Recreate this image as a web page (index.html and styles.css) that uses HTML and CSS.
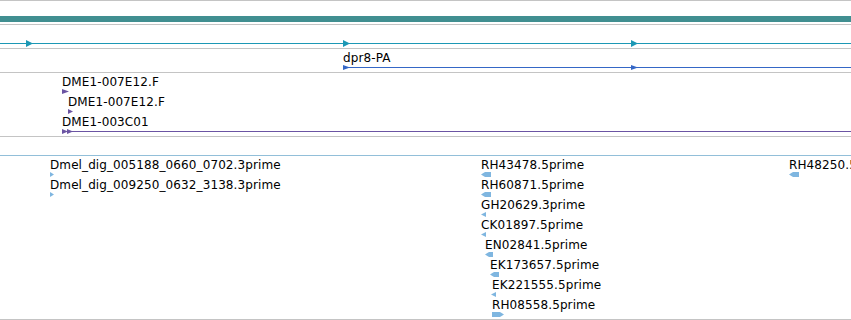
FILE: index.html
```html
<!DOCTYPE html>
<html>
<head>
	<title>dpr8 region</title>
	<link rel="stylesheet" href="styles.css">
</head>
<body>

<div class="browser">

	<!-- reference sequence overview -->
	<div class="track trackRef">
		<div class="refBar"></div>
	</div>

	<!-- gene span -->
	<div class="track trackGene">
		<svg class="strandLine" width="851" height="7">
			<line x1="0" y1="3.5" x2="851" y2="3.5" class="cyanStroke"/>
			<polygon points="26,0 33,3.5 26,7" class="cyanFill"/>
			<polygon points="343,0 350,3.5 343,7" class="cyanFill"/>
			<polygon points="631,0 638,3.5 631,7" class="cyanFill"/>
		</svg>
	</div>

	<!-- transcripts -->
	<div class="track trackMrna">
		<div class="feat" style="left:343px; top:2px;">
			<span class="label">dpr8-PA</span>
			<svg class="glyph" width="508" height="5">
				<line x1="0" y1="2.5" x2="508" y2="2.5" class="blueStroke"/>
				<polygon points="0,0 7,2.5 0,5" class="blueFill"/>
				<polygon points="288,0 295,2.5 288,5" class="blueFill"/>
			</svg>
		</div>
	</div>

	<!-- cDNA clones -->
	<div class="track trackClone">
		<div class="feat" style="left:62px; top:2px;">
			<span class="label">DME1-007E12.F</span>
			<svg class="glyph" width="8" height="5">
				<polygon points="0,0 7,2.5 0,5" class="purpleFill"/>
			</svg>
		</div>
		<div class="feat" style="left:68px; top:22px;">
			<span class="label">DME1-007E12.F</span>
			<svg class="glyph" width="6" height="5">
				<polygon points="0,0 5,2.5 0,5" class="purpleFill"/>
			</svg>
		</div>
		<div class="feat" style="left:62px; top:42px;">
			<span class="label">DME1-003C01</span>
			<svg class="glyph" width="789" height="5">
				<line x1="10" y1="2.5" x2="789" y2="2.5" class="purpleStroke"/>
				<polygon points="0,0 6,2.5 0,5" class="purpleFill"/>
				<polygon points="5,0 11,2.5 5,5" class="purpleFill"/>
			</svg>
		</div>
	</div>

	<div class="track trackEmpty"></div>

	<!-- EST hits -->
	<div class="track trackEst">
		<div class="feat" style="left:50px; top:2px;">
			<span class="label">Dmel_dig_005188_0660_0702.3prime</span>
			<svg class="glyph" width="4" height="5"><polygon points="0,0 4,2.5 0,5" class="estFill"/></svg>
		</div>
		<div class="feat" style="left:50px; top:22px;">
			<span class="label">Dmel_dig_009250_0632_3138.3prime</span>
			<svg class="glyph" width="4" height="5"><polygon points="0,0 4,2.5 0,5" class="estFill"/></svg>
		</div>

		<div class="feat" style="left:481px; top:2px;">
			<span class="label">RH43478.5prime</span>
			<svg class="glyph" width="10" height="5"><polygon points="0,2.5 4,0 10,0 10,5 4,5" class="estFill"/></svg>
		</div>
		<div class="feat" style="left:481px; top:22px;">
			<span class="label">RH60871.5prime</span>
			<svg class="glyph" width="10" height="5"><polygon points="0,2.5 4,0 10,0 10,5 4,5" class="estFill"/></svg>
		</div>
		<div class="feat" style="left:481px; top:42px;">
			<span class="label">GH20629.3prime</span>
			<svg class="glyph" width="6" height="5"><polygon points="0,2.5 5,0 5,5" class="estFill"/></svg>
		</div>
		<div class="feat" style="left:481px; top:62px;">
			<span class="label">CK01897.5prime</span>
			<svg class="glyph" width="6" height="5"><polygon points="0,2.5 5,0 5,5" class="estFill"/></svg>
		</div>
		<div class="feat" style="left:485px; top:82px;">
			<span class="label">EN02841.5prime</span>
			<svg class="glyph" width="8" height="5"><polygon points="0,2.5 4,0 8,0 8,5 4,5" class="estFill"/></svg>
		</div>
		<div class="feat" style="left:490px; top:102px;">
			<span class="label">EK173657.5prime</span>
			<svg class="glyph" width="9" height="5"><polygon points="0,2.5 4,0 9,0 9,5 4,5" class="estFill"/></svg>
		</div>
		<div class="feat" style="left:491px; top:122px;">
			<span class="label labelPad">EK221555.5prime</span>
			<svg class="glyph" width="5" height="5"><polygon points="0,2.5 5,0 5,5" class="estFill"/></svg>
		</div>
		<div class="feat" style="left:492px; top:142px;">
			<span class="label">RH08558.5prime</span>
			<svg class="glyph" width="12" height="5"><polygon points="0,0 8,0 12,2.5 8,5 0,5" class="estFill"/></svg>
		</div>

		<div class="feat" style="left:789px; top:2px;">
			<span class="label">RH48250.5prime</span>
			<svg class="glyph" width="10" height="5"><polygon points="0,2.5 4,0 10,0 10,5 4,5" class="estFill"/></svg>
		</div>
	</div>

</div>

</body>
</html>
```

FILE: styles.css
```css
body {
	margin: 0;
	background: #fff;
	font-family: "DejaVu Sans", "Liberation Sans", sans-serif;
	font-size: 12px;
	color: #000;
	overflow: hidden;
}
.browser {
	display: flex;
	flex-direction: column;
	width: 851px;
	border-bottom: 1px solid #c4c4c4;
	overflow: hidden;
}
.track {
	position: relative;
	border-top: 1px solid #c4c4c4;
	overflow: hidden;
}
.trackRef {
	height: 23px;
}
.trackGene {
	height: 23px;
}
.trackMrna {
	height: 23px;
}
.trackClone {
	height: 63px;
}
.trackEmpty {
	height: 18px;
}
.trackEst {
	height: 163px;
	border-top-color: #92bfd9;
}
.refBar {
	margin-top: 15px;
	height: 6px;
	background-color: #418f91;
}
.strandLine {
	display: block;
	margin-top: 15px;
}
.feat {
	position: absolute;
	white-space: nowrap;
}
.label {
	display: block;
	height: 14px;
	line-height: 14px;
	letter-spacing: 0.1px;
}
.labelPad {
	padding-left: 1px;
}
.glyph {
	display: block;
}
.cyanStroke {
	stroke: #1c98b5;
	stroke-width: 1;
}
.cyanFill {
	fill: #1c98b5;
}
.blueStroke {
	stroke: #3567c6;
	stroke-width: 1;
}
.blueFill {
	fill: #3567c6;
}
.purpleStroke {
	stroke: #6b54a3;
	stroke-width: 1;
}
.purpleFill {
	fill: #6b54a3;
}
.estFill {
	fill: #7fb6e0;
}
```
